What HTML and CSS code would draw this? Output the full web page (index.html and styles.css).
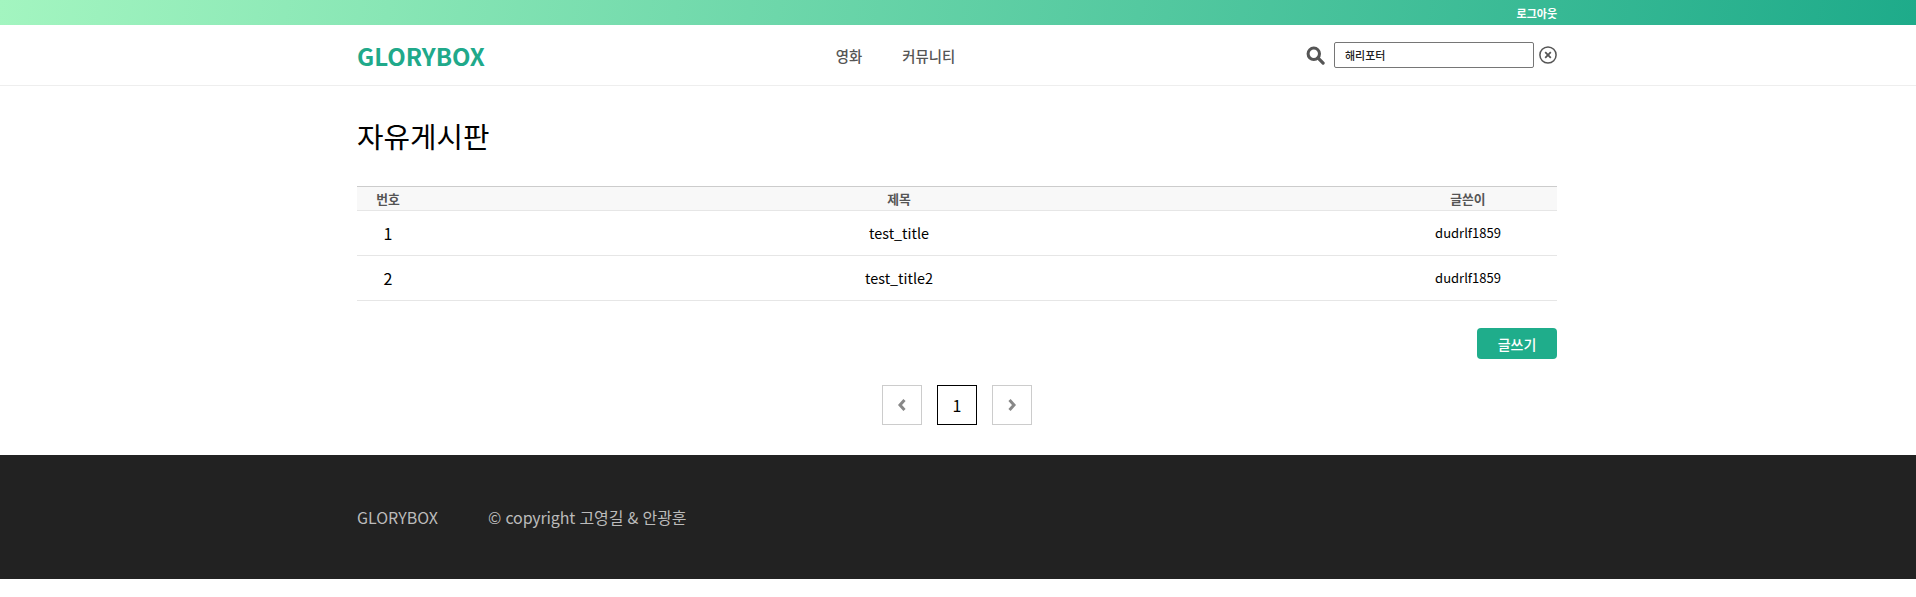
FILE: index.html
```html
<!DOCTYPE html>
<html lang="ko">
<head>
<meta charset="utf-8">
<title>GLORYBOX</title>
<link rel="stylesheet" href="styles.css">
</head>
<body>
<div class="topbar"><div class="wrap topbar-inner"><a class="logout">로그아웃</a></div></div>
<header class="header">
  <div class="wrap header-inner">
    <div class="logo">GLORYBOX</div>
    <nav class="nav"><a>영화</a><a>커뮤니티</a></nav>
    <div class="search">
      <svg class="icon-search" viewBox="0 0 20 20" width="19" height="19"><circle cx="8.2" cy="8.2" r="6" fill="none" stroke="#555" stroke-width="3.2"/><path d="M12.6 12.6L18 18" stroke="#555" stroke-width="3.4" stroke-linecap="round"/></svg>
      <input class="search-input" type="text" value="해리포터">
      <svg class="icon-clear" viewBox="0 0 18 18" width="18" height="18"><circle cx="9" cy="9" r="8.1" fill="none" stroke="#555" stroke-width="1.5"/><path d="M6.2 6.200L11.800 11.800M11.800 6.200L6.200 11.800" stroke="#555" stroke-width="1.8"/></svg>
    </div>
  </div>
</header>
<main class="wrap main">
  <h1 class="title">자유게시판</h1>
  <table class="board">
    <thead><tr><th class="c-no">번호</th><th>제목</th><th class="c-author">글쓴이</th></tr></thead>
    <tbody>
      <tr><td class="no">1</td><td>test_title</td><td class="author">dudrlf1859</td></tr>
      <tr><td class="no">2</td><td>test_title2</td><td class="author">dudrlf1859</td></tr>
    </tbody>
  </table>
  <div class="actions"><button class="write">글쓰기</button></div>
  <div class="pager">
    <a class="page"><svg viewBox="0 0 10 14" width="10" height="14"><path d="M7.5 2L3 7l4.500 5" fill="none" stroke="#888" stroke-width="3"/></svg></a>
    <a class="page current">1</a>
    <a class="page"><svg viewBox="0 0 10 14" width="10" height="14"><path d="M2.500 2L7 7l-4.500 5" fill="none" stroke="#888" stroke-width="3"/></svg></a>
  </div>
</main>
<footer class="footer"><div class="wrap footer-inner"><span class="f-logo">GLORYBOX</span><span class="f-copy">© copyright 고영길 &amp; 안광훈</span></div></footer>
</body>
</html>
```
FILE: styles.css
```css
* { box-sizing: border-box; }
html, body { margin: 0; padding: 0; }
body { font-family: "Noto Sans CJK KR", "Noto Sans", sans-serif; color: #000; background: #fff; }
.wrap { width: 1200px; margin: 0 auto; position: relative; left: -1px; }
.topbar { height: 25px; background: linear-gradient(100deg, #a3f5c0, #1eab8a); }
.topbar-inner { display: flex; justify-content: flex-end; align-items: center; height: 25px; }
.logout { font-size: 11px; font-weight: 700; color: #fff; }
.header { height: 61px; border-bottom: 1px solid #eee; }
.header-inner { display: flex; justify-content: space-between; align-items: center; height: 60px; }
.logo { font-size: 24px; font-weight: 700; color: #20a98a; }
.nav { display: flex; gap: 40px; font-size: 14.4px; font-weight: 500; color: #555; }
.search { display: flex; align-items: center; justify-content: flex-end; }
.icon-search { margin-right: 9px; }
.search-input { width: 200px; height: 26px; border: 1px solid #767676; border-radius: 2px; padding: 0 10px; font: 500 11px "Noto Sans CJK KR", sans-serif; color: #222; outline: 0; }
.icon-clear { margin-left: 5px; }
.main { height: 369px; }
.title { margin: 0; padding-top: 30px; height: 100px; font-size: 28.8px; font-weight: 400; line-height: 40px; }
.board { width: 100%; border-collapse: collapse; table-layout: fixed; border-top: 1px solid #ccc; }
.board th { height: 24px; padding: 0; background: #f8f8f8; border-bottom: 1px solid #e6e6e6; font-size: 12.8px; font-weight: 700; color: #555; text-align: center; }
.board td { height: 45px; padding: 0 0 1px; border-bottom: 1px solid #e6e6e6; font-size: 14.4px; text-align: center; }
.c-no { width: 62px; }
.c-author { width: 178px; }
.board td.no { font-size: 16px; padding: 0; }
.board td.author { font-size: 13px; }
.actions { display: flex; justify-content: flex-end; margin-top: 27px; }
.write { width: 80px; height: 31px; border: 0; border-radius: 4px; background: #1fad8b; color: #fff; font: 500 14px "Noto Sans CJK KR", sans-serif; }
.pager { display: flex; justify-content: center; gap: 15px; margin-top: 26px; }
.page { width: 40px; height: 40px; border: 1px solid #ccc; display: flex; align-items: center; justify-content: center; font-size: 16px; }
.page.current { border-color: #000; }
.footer { height: 124px; background: #222; }
.footer-inner { display: flex; align-items: center; height: 124px; font-size: 16px; color: #bbb; }
.f-logo { width: 131px; }
.f-copy { letter-spacing: -0.15px; }
```
